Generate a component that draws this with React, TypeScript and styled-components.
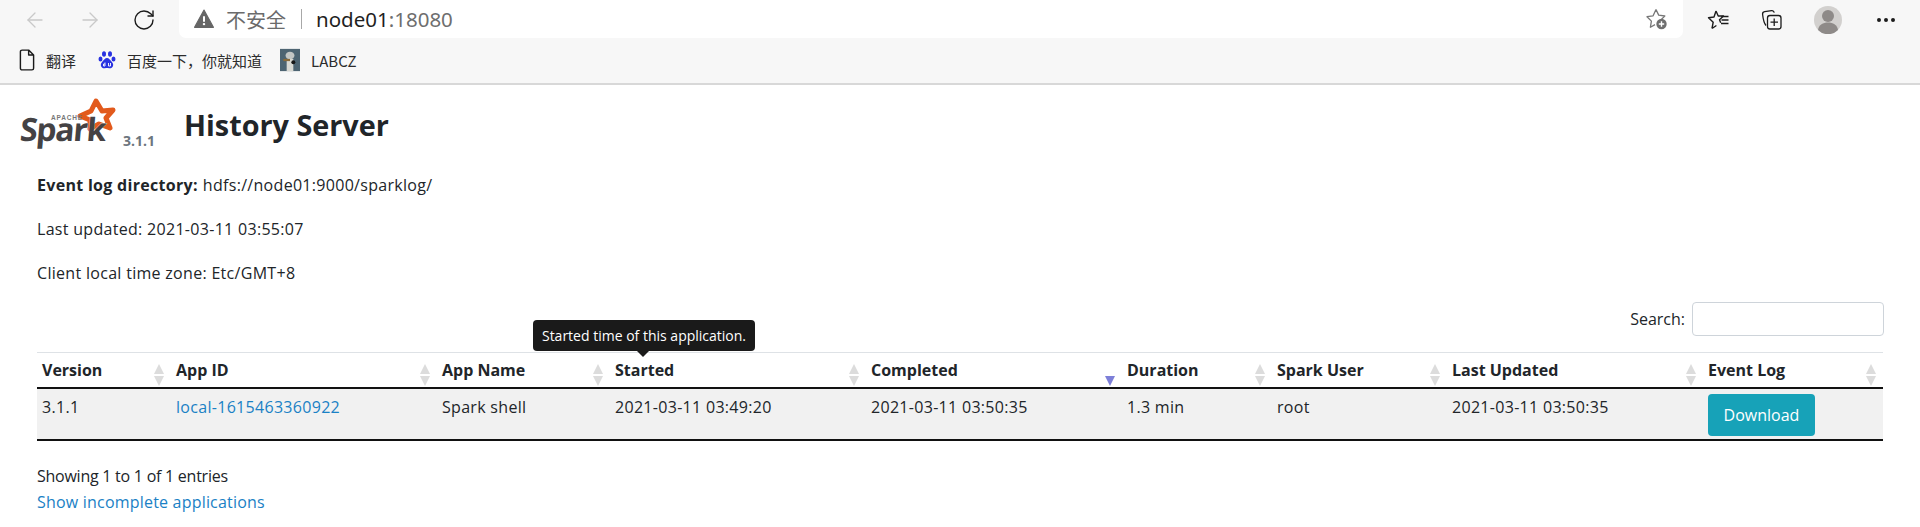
import React from 'react';
import styled, { createGlobalStyle } from 'styled-components';
import { ArrowLeft, ArrowRight, RotateCw, MoreHorizontal } from 'lucide-react';

const GlobalStyle = createGlobalStyle`
  html, body {
    margin: 0;
    padding: 0;
    background: #fff;
    font-family: 'Open Sans', 'Noto Sans CJK SC', sans-serif;
    color: #212529;
  }
`;

const Page = styled.div`
  width: 1920px;
  height: 527px;
  overflow: hidden;
  position: relative;
`;

const BrowserBar = styled.div`
  height: 85px;
  box-sizing: border-box;
  background: #f7f7f7;
  border-bottom: 2px solid #d8d8d8;
  display: flex;
  flex-direction: column;
`;

const NavRow = styled.div`
  height: 43px;
  display: flex;
  align-items: flex-start;
`;

const NavButton = styled.div<{ $w?: number }>`
  width: ${(p) => p.$w ?? 55}px;
  height: 40px;
  display: flex;
  align-items: center;
  justify-content: center;
  flex-shrink: 0;
`;

const NavButtons = styled.div`
  width: 179px;
  padding-left: 7px;
  box-sizing: border-box;
  display: flex;
  flex-shrink: 0;
`;

const AddressBar = styled.div`
  width: 1504px;
  height: 38px;
  background: #fff;
  border-radius: 0 0 7px 7px;
  display: flex;
  align-items: center;
  padding: 0 14px 0 15px;
  box-sizing: border-box;
  font-size: 20px;
  flex-shrink: 0;
`;

const InsecureText = styled.span`
  color: #6b6b6b;
  margin-left: 12px;
  font-family: 'Noto Sans CJK SC', sans-serif;
`;

const Divider = styled.span`
  width: 1px;
  height: 20px;
  background: #a8a8a8;
  margin: 0 14px 0 15px;
`;

const Host = styled.span`
  color: #1f1f1f;
  font-family: 'Noto Sans', sans-serif;
  font-size: 20.5px;
`;

const Port = styled.span`
  color: #6e6e6e;
`;

const AddressEnd = styled.div`
  margin-left: auto;
  display: flex;
  align-items: center;
`;

const ToolIcons = styled.div`
  display: flex;
  align-items: center;
  height: 40px;
  padding-left: 9px;
`;

const BookmarkRow = styled.div`
  height: 34px;
  display: flex;
  align-items: center;
  padding-left: 19px;
  font-family: 'Noto Sans CJK SC', sans-serif;
  font-size: 15px;
  color: #2c2c2c;
`;

const Bookmark = styled.div<{ $w: number }>`
  width: ${(p) => p.$w}px;
  display: flex;
  align-items: center;
  gap: 11px;
`;

const Content = styled.div`
  padding: 0 37px;
  font-size: 16px;
  line-height: 22px;
`;

const TitleRow = styled.div`
  height: 76px;
  display: flex;
  align-items: flex-start;
  margin-left: -18px;
`;

const LogoWrap = styled.div`
  width: 104px;
  height: 60px;
  margin-top: 13px;
  flex-shrink: 0;
`;

const VersionTag = styled.span`
  font-size: 14px;
  font-weight: 700;
  color: #6c757d;
  width: 61px;
  flex-shrink: 0;
  margin-top: 45px;
`;

const Title = styled.h3`
  margin: 19px 0 0;
  font-size: 28.8px;
  line-height: 42px;
  font-weight: 700;
`;

const InfoLine = styled.div`
  height: 44px;
  display: flex;
  align-items: flex-start;
  padding-top: 13px;
  box-sizing: border-box;
  letter-spacing: 0.3px;

  strong {
    font-weight: 700;
    margin-right: 5px;
  }
`;

const SearchRow = styled.div`
  display: flex;
  justify-content: flex-end;
  align-items: center;
  height: 34px;
  margin-top: 9px;
  margin-bottom: 16px;
  gap: 7px;
`;

const SearchInput = styled.input`
  width: 192px;
  height: 34px;
  box-sizing: border-box;
  border: 1px solid #ced4da;
  border-radius: 4px;
  background: #fff;
  margin-right: -1px;
`;

const Table = styled.table`
  width: 1846px;
  border-collapse: collapse;
  table-layout: fixed;
`;

const HeadCell = styled.th<{ $w: number }>`
  width: ${(p) => p.$w}px;
  height: 35px;
  box-sizing: border-box;
  padding: 0 5px;
  text-align: left;
  font-weight: 700;
  border-top: 1px solid #dee2e6;
  border-bottom: 2px solid #111;
  position: relative;
`;

const SortMark = styled.span`
  position: absolute;
  right: 6px;
  bottom: 0;
  line-height: 0;
`;

const Row = styled.tr`
  background: #f1f1f1;
`;

const Cell = styled.td`
  height: 52px;
  box-sizing: border-box;
  padding: 5px 5px 2px;
  vertical-align: top;
  border-bottom: 2px solid #111;
`;

const CellText = styled.div`
  padding-top: 2px;
  letter-spacing: 0.3px;
`;

const Link = styled.a`
  color: #1a81c5;
  text-decoration: none;
`;

const DownloadButton = styled.a`
  display: flex;
  align-items: center;
  justify-content: center;
  width: 107px;
  height: 42px;
  background: #17a2b8;
  color: #fff;
  border-radius: 4px;
  font-size: 16px;
`;

const Footer = styled.div`
  margin-top: 22px;
  line-height: 26px;
`;

const EntriesText = styled.div`
  letter-spacing: -0.25px;
`;

const IncompleteLink = styled(Link)`
  letter-spacing: 0.2px;
`;

const Tooltip = styled.div`
  position: absolute;
  left: 533px;
  top: 320px;
  width: 222px;
  height: 31px;
  background: #1a1a1a;
  color: #fff;
  border-radius: 4px;
  font-size: 14px;
  display: flex;
  align-items: center;
  justify-content: center;
  white-space: nowrap;

  &::after {
    content: '';
    position: absolute;
    left: 104px;
    top: 31px;
    border: 6px solid transparent;
    border-bottom: 0;
    border-top-color: #1a1a1a;
  }
`;

const BackStar = () => (
  <svg width="24" height="24" viewBox="0 0 24 24">
    <path d="M11 2.500l2.700 5.600 6.100.9-3.600 3.600M10 17.600l-4.600 2.600 1-6.100-4.400-4.400 6.100-.9L11 2.500" fill="none" stroke="#777" strokeWidth="1.300" strokeLinejoin="round" />
    <circle cx="16.500" cy="17" r="5.200" fill="#6f6f6f" />
    <path d="M16.500 14.300v5.400M13.800 17h5.400" stroke="#fff" strokeWidth="1.400" />
  </svg>
);

const FavIcon = () => (
  <svg width="24" height="24" viewBox="0 0 24 24">
    <path d="M10 3l2.200 5h5.300l-4 3.700 1.200 3M6 20.500l1.200-6.300L2.500 9.800 8 9 10 3M6 20.500l4.400-3" fill="none" stroke="#1c1c1c" strokeWidth="1.400" strokeLinejoin="round" />
    <path d="M15.500 8.500h7M15.500 12h7M15 15.500h7.500" stroke="#1c1c1c" strokeWidth="1.300" />
  </svg>
);

const CollectionIcon = () => (
  <svg width="24" height="24" viewBox="0 0 24 24">
    <path d="M6 17.500C3.800 15 3 10 2.600 6.500c-.2-1.500.6-2.600 2-2.800l7-1c1.300-.2 2.300.5 2.700 2" fill="none" stroke="#1c1c1c" strokeWidth="1.300" />
    <rect x="7.500" y="7.500" width="13.500" height="13.500" rx="2.500" fill="#f7f7f7" stroke="#1c1c1c" strokeWidth="1.300" />
    <path d="M14.200 10.500v7.500M10.500 14.200H18" stroke="#1c1c1c" strokeWidth="1.300" />
  </svg>
);

const Avatar = () => (
  <svg width="28" height="28" viewBox="0 0 28 28">
    <circle cx="14" cy="14" r="14" fill="#d2d0ce" />
    <circle cx="14" cy="10" r="6" fill="#8e8a88" />
    <path d="M4 24c1-5.500 5-7.500 10-7.500s9 2 10 7.500a14 14 0 0 1-20 0z" fill="#8e8a88" />
  </svg>
);

const WarnIcon = () => (
  <svg width="20" height="20" viewBox="0 0 18 18">
    <path d="M9 1L17.500 16.500H.5z" fill="#666" stroke="#666" strokeLinejoin="round" />
    <path d="M9 6.500v5" stroke="#fff" strokeWidth="1.800" />
    <circle cx="9" cy="13.600" r="1.100" fill="#fff" />
  </svg>
);

const PageIcon = () => (
  <svg width="16" height="22" viewBox="0 0 14 20">
    <path d="M2.500 1h6L13 5.500V17.500a1.500 1.500 0 0 1-1.500 1.500h-9A1.500 1.500 0 0 1 1 17.500v-15A1.500 1.500 0 0 1 2.500 1zM8.500 1v4.500H13" fill="none" stroke="#1a1a1a" strokeWidth="1.300" strokeLinejoin="round" />
  </svg>
);

const BaiduIcon = () => (
  <svg width="18" height="20" viewBox="0 0 18 20">
    <g fill="#2932e1">
      <ellipse cx="6" cy="4" rx="2" ry="2.800" />
      <ellipse cx="12" cy="4" rx="2" ry="2.800" />
      <ellipse cx="2.500" cy="9" rx="2" ry="2.600" />
      <ellipse cx="15.500" cy="9" rx="2" ry="2.600" />
      <path d="M9 8c-2 0-3 2-4.500 3.500C3 13 2.500 14.500 3 16c.6 2 2.500 2.500 4 2.200 1.300-.2 2.700-.2 4 0 1.500.3 3.400-.2 4-2.200.5-1.500 0-3-1.500-4.500C12 10 11 8 9 8z" />
    </g>
    <path d="M7 12.500v3.500H5.500v-2H7M10.500 13v3h2v-3" fill="none" stroke="#fff" strokeWidth="0.900" />
  </svg>
);

const LabczIcon = () => (
  <svg width="20" height="24" viewBox="0 0 18 20">
    <rect width="18" height="20" fill="#4d6472" />
    <ellipse cx="9" cy="6" rx="4" ry="3.500" fill="#c3c6c4" />
    <rect x="6" y="9" width="6" height="11" fill="#d8d8d2" />
    <rect x="3" y="9" width="6" height="2" fill="#8a6a3a" />
    <circle cx="12" cy="12" r="1.800" fill="#161616" />
  </svg>
);

const SparkLogo = () => (
  <svg width="104" height="60" viewBox="0 0 104 60">
    <polygon
      points="77,3 83,13 94,12 87,20 91,30 80,26 71,31 71,22 61,18 72,13"
      fill="#fff"
      stroke="#e25a1c"
      strokeWidth="5"
      strokeLinejoin="round"
    />
    <text x="32" y="22" fontFamily="'Liberation Sans', sans-serif" fontSize="6.500" fontWeight="700" fill="#777" letterSpacing="0.800">
      APACHE
    </text>
    <text x="0" y="43" fontFamily="'Open Sans', sans-serif" fontSize="32" fontWeight="700" fill="#444244" letterSpacing="-1.300" stroke="#fff" strokeWidth="0.5" paintOrder="stroke" transform="skewX(-5) translate(4 0)">
      Spark
    </text>
  </svg>
);

const SortArrows: React.FC<{ active?: boolean }> = ({ active }) => (
  <svg width="12" height="24" viewBox="0 0 12 24">
    {!active && <path d="M6 1l5 10H1z" fill="#dcdcdc" />}
    <path d="M6 23l5-10H1z" fill={active ? '#7d7fd8' : '#dcdcdc'} />
  </svg>
);

const columns = [
  { name: 'Version', w: 134 },
  { name: 'App ID', w: 266 },
  { name: 'App Name', w: 173 },
  { name: 'Started', w: 256 },
  { name: 'Completed', w: 256, active: true },
  { name: 'Duration', w: 150 },
  { name: 'Spark User', w: 175 },
  { name: 'Last Updated', w: 256 },
  { name: 'Event Log', w: 180 },
];

const App: React.FC = () => {
  return (
    <Page>
      <GlobalStyle />
      <BrowserBar>
        <NavRow>
          <NavButtons>
            <NavButton>
              <ArrowLeft size={24} color="#c9c9c9" strokeWidth={1.3} />
            </NavButton>
            <NavButton>
              <ArrowRight size={24} color="#c9c9c9" strokeWidth={1.3} />
            </NavButton>
            <NavButton $w={53}>
              <RotateCw size={24} color="#1c1c1c" strokeWidth={1.4} />
            </NavButton>
          </NavButtons>
          <AddressBar>
            <WarnIcon />
            <InsecureText>不安全</InsecureText>
            <Divider />
            <Host>
              node01<Port>:18080</Port>
            </Host>
            <AddressEnd>
              <BackStar />
            </AddressEnd>
          </AddressBar>
          <ToolIcons>
            <NavButton $w={52}>
              <FavIcon />
            </NavButton>
            <NavButton $w={56}>
              <CollectionIcon />
            </NavButton>
            <NavButton $w={56}>
              <Avatar />
            </NavButton>
            <NavButton $w={60}>
              <MoreHorizontal size={24} color="#1c1c1c" strokeWidth={2} />
            </NavButton>
          </ToolIcons>
        </NavRow>
        <BookmarkRow>
          <Bookmark $w={79}>
            <PageIcon />
            翻译
          </Bookmark>
          <Bookmark $w={182}>
            <BaiduIcon />
            百度一下，你就知道
          </Bookmark>
          <Bookmark $w={100}>
            <LabczIcon />
            LABCZ
          </Bookmark>
        </BookmarkRow>
      </BrowserBar>
      <Content>
        <TitleRow>
          <LogoWrap>
            <SparkLogo />
          </LogoWrap>
          <VersionTag>3.1.1</VersionTag>
          <Title>History Server</Title>
        </TitleRow>
        <InfoLine>
          <strong>Event log directory:</strong> hdfs://node01:9000/sparklog/
        </InfoLine>
        <InfoLine>Last updated: 2021-03-11 03:55:07</InfoLine>
        <InfoLine>Client local time zone: Etc/GMT+8</InfoLine>
        <SearchRow>
          Search:
          <SearchInput />
        </SearchRow>
        <Table>
          <thead>
            <tr>
              {columns.map((c) => (
                <HeadCell key={c.name} $w={c.w}>
                  {c.name}
                  <SortMark>
                    <SortArrows active={c.active} />
                  </SortMark>
                </HeadCell>
              ))}
            </tr>
          </thead>
          <tbody>
            <Row>
              <Cell><CellText>3.1.1</CellText></Cell>
              <Cell><CellText><Link>local-1615463360922</Link></CellText></Cell>
              <Cell><CellText>Spark shell</CellText></Cell>
              <Cell><CellText>2021-03-11 03:49:20</CellText></Cell>
              <Cell><CellText>2021-03-11 03:50:35</CellText></Cell>
              <Cell><CellText>1.3 min</CellText></Cell>
              <Cell><CellText>root</CellText></Cell>
              <Cell><CellText>2021-03-11 03:50:35</CellText></Cell>
              <Cell><DownloadButton>Download</DownloadButton></Cell>
            </Row>
          </tbody>
        </Table>
        <Footer>
          <EntriesText>Showing 1 to 1 of 1 entries</EntriesText>
          <IncompleteLink>Show incomplete applications</IncompleteLink>
        </Footer>
      </Content>
      <Tooltip>Started time of this application.</Tooltip>
    </Page>
  );
};

export default App;
